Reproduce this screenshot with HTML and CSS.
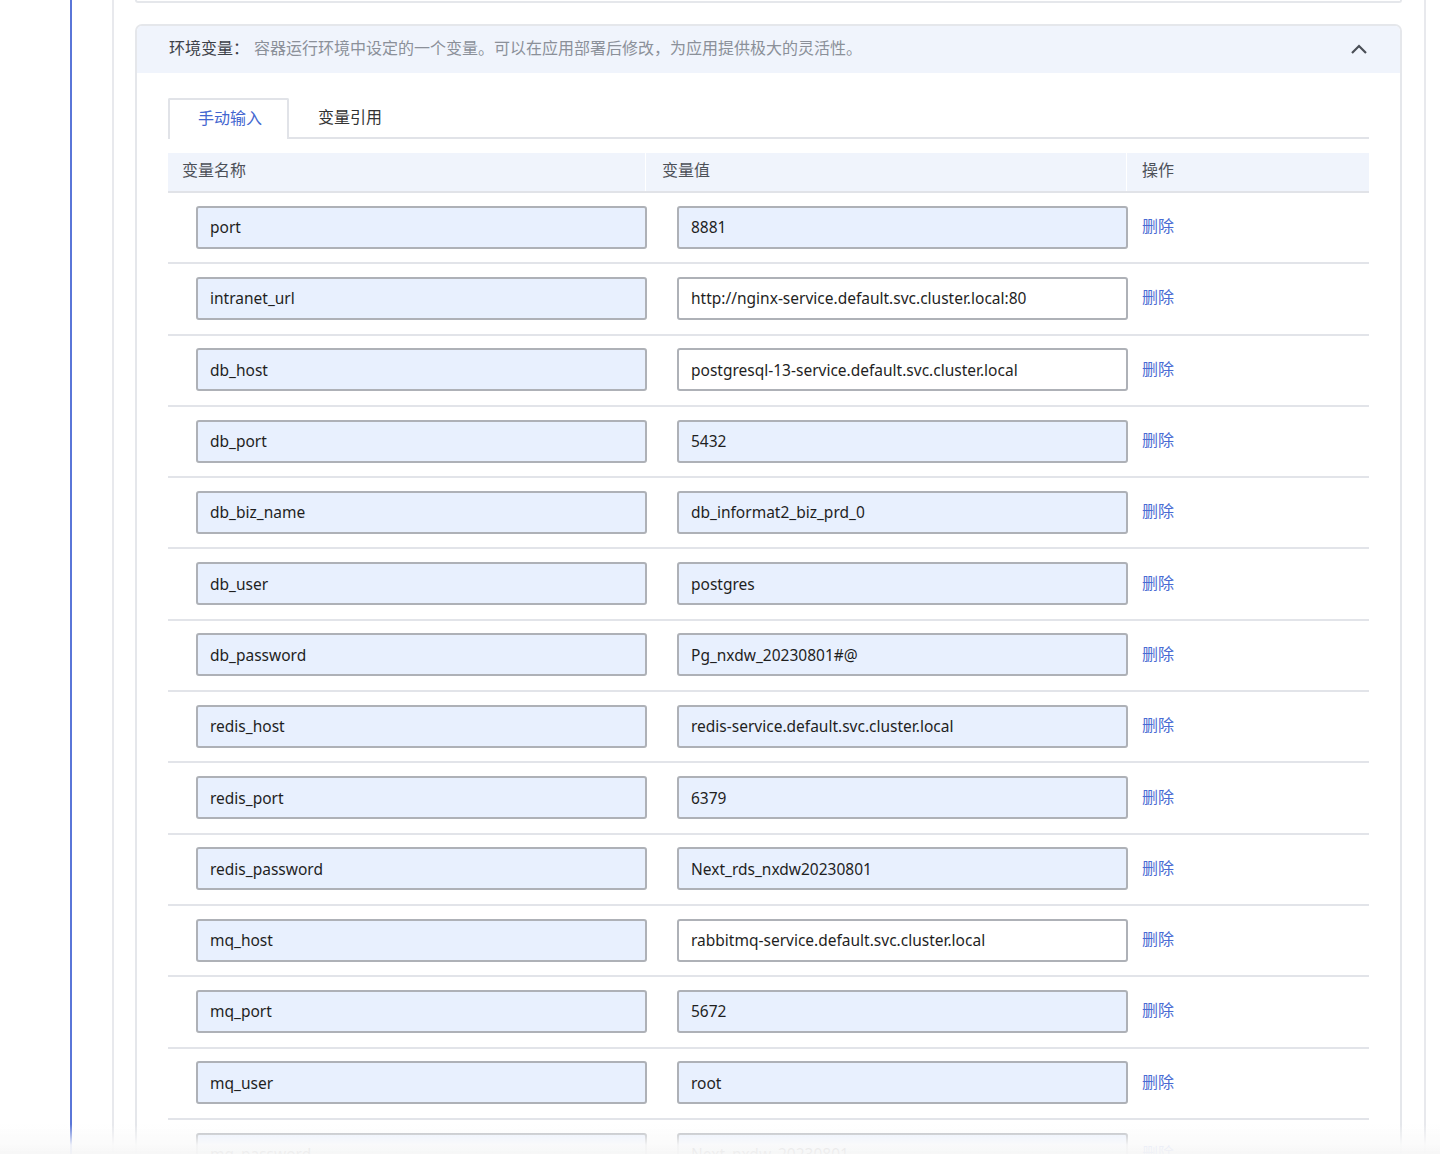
FILE: index.html
```html
<!DOCTYPE html>
<html lang="zh-CN">
<head>
<meta charset="utf-8">
<title>环境变量</title>
<link rel="stylesheet" href="styles.css">
</head>
<body>
<div class="page">
  <div class="rail"></div>
  <div class="main">
    <div class="container">
      <div class="prev-card"></div>
      <section class="env-card">
        <header class="env-head">
          <div class="env-title"><span class="env-label">环境变量：</span><span class="env-desc">容器运行环境中设定的一个变量。可以在应用部署后修改，为应用提供极大的灵活性。</span></div>
          <svg class="chevron" width="18" height="12" viewBox="0 0 18 12"><path d="M2 10 L9 3 L16 10" fill="none" stroke="#4a4f57" stroke-width="2.2"/></svg>
        </header>
        <div class="env-body">
          <div class="tabs">
            <div class="tab active">手动输入</div>
            <div class="tab">变量引用</div>
          </div>
          <div class="table">
            <div class="thead">
              <div class="th">变量名称</div>
              <div class="th">变量值</div>
              <div class="th">操作</div>
            </div>
            <div class="tr"><div class="td"><input class="ipt fill" value="port" readonly></div><div class="td"><input class="ipt fill" value="8881" readonly></div><div class="td"><a class="del">删除</a></div></div>
            <div class="tr"><div class="td"><input class="ipt fill" value="intranet_url" readonly></div><div class="td"><input class="ipt" value="http://nginx-service.default.svc.cluster.local:80" readonly></div><div class="td"><a class="del">删除</a></div></div>
            <div class="tr"><div class="td"><input class="ipt fill" value="db_host" readonly></div><div class="td"><input class="ipt" value="postgresql-13-service.default.svc.cluster.local" readonly></div><div class="td"><a class="del">删除</a></div></div>
            <div class="tr"><div class="td"><input class="ipt fill" value="db_port" readonly></div><div class="td"><input class="ipt fill" value="5432" readonly></div><div class="td"><a class="del">删除</a></div></div>
            <div class="tr"><div class="td"><input class="ipt fill" value="db_biz_name" readonly></div><div class="td"><input class="ipt fill" value="db_informat2_biz_prd_0" readonly></div><div class="td"><a class="del">删除</a></div></div>
            <div class="tr"><div class="td"><input class="ipt fill" value="db_user" readonly></div><div class="td"><input class="ipt fill" value="postgres" readonly></div><div class="td"><a class="del">删除</a></div></div>
            <div class="tr"><div class="td"><input class="ipt fill" value="db_password" readonly></div><div class="td"><input class="ipt fill" value="Pg_nxdw_20230801#@" readonly></div><div class="td"><a class="del">删除</a></div></div>
            <div class="tr"><div class="td"><input class="ipt fill" value="redis_host" readonly></div><div class="td"><input class="ipt fill" value="redis-service.default.svc.cluster.local" readonly></div><div class="td"><a class="del">删除</a></div></div>
            <div class="tr"><div class="td"><input class="ipt fill" value="redis_port" readonly></div><div class="td"><input class="ipt fill" value="6379" readonly></div><div class="td"><a class="del">删除</a></div></div>
            <div class="tr"><div class="td"><input class="ipt fill" value="redis_password" readonly></div><div class="td"><input class="ipt fill" value="Next_rds_nxdw20230801" readonly></div><div class="td"><a class="del">删除</a></div></div>
            <div class="tr"><div class="td"><input class="ipt fill" value="mq_host" readonly></div><div class="td"><input class="ipt" value="rabbitmq-service.default.svc.cluster.local" readonly></div><div class="td"><a class="del">删除</a></div></div>
            <div class="tr"><div class="td"><input class="ipt fill" value="mq_port" readonly></div><div class="td"><input class="ipt fill" value="5672" readonly></div><div class="td"><a class="del">删除</a></div></div>
            <div class="tr"><div class="td"><input class="ipt fill" value="mq_user" readonly></div><div class="td"><input class="ipt fill" value="root" readonly></div><div class="td"><a class="del">删除</a></div></div>
            <div class="tr"><div class="td"><input class="ipt fill" value="mq_password" readonly></div><div class="td"><input class="ipt fill" value="Next_nxdw_20230801" readonly></div><div class="td"><a class="del">删除</a></div></div>
          </div>
        </div>
      </section>
    </div>
  </div>
</div>
<div class="fade"></div>
</body>
</html>
```

FILE: styles.css
```css
html, body {
  margin: 0;
  padding: 0;
  background: #ffffff;
  height: 1154px;
  overflow: hidden;
}
body {
  font-family: "Noto Sans", "Noto Sans CJK SC", sans-serif;
  color: #222;
}
.page {
  display: flex;
  min-height: 1154px;
}
.rail {
  width: 70px;
  flex: none;
  border-right: 2px solid #5a76d8;
}
.main {
  flex: 1;
  padding-left: 40px;
  padding-right: 14px;
}
.container {
  border-left: 2px solid #e8e9ed;
  border-right: 2px solid #e8e9ed;
  padding: 0 22px 0 21px;
  min-height: 1154px;
}
.prev-card {
  height: 1px;
  border: 2px solid #e5e7eb;
  border-top: 0;
  border-radius: 0 0 6px 6px;
}
.env-card {
  margin-top: 21px;
  border: 2px solid #e5e7eb;
  border-radius: 7px;
  overflow: hidden;
}
.env-head {
  height: 47px;
  background: #f0f4fc;
  display: flex;
  align-items: center;
  justify-content: space-between;
  padding: 0 32px 0 32px;
}
.env-title {
  font-size: 16px;
  line-height: 20px;
  margin-top: -4px;
  white-space: nowrap;
}
.env-label {
  color: #3d4148;
  margin-right: 5px;
}
.env-desc {
  color: #8b9099;
}
.chevron {
  display: block;
  margin-top: -2px;
}
.env-body {
  padding: 25px 31px 0 31px;
}
.tabs {
  display: flex;
  border-bottom: 2px solid #e1e3e8;
  height: 39px;
}
.tab {
  height: 39px;
  padding: 0 29px;
  font-size: 16px;
  line-height: 39px;
  color: #333;
  box-sizing: border-box;
  white-space: nowrap;
}
.tab.active {
  color: #4466d0;
  border: 2px solid #e1e3e8;
  border-bottom: 0;
  height: 41px;
  line-height: 37px;
  padding: 0 25px 0 28px;
  background: #fff;
  border-radius: 2px 2px 0 0;
}
.table {
  margin-top: 14px;
}
.thead {
  display: grid;
  grid-template-columns: 478px 481px 241px;
  background: #f0f4fc;
  border-bottom: 2px solid #e1e3e8;
  height: 38px;
}
.th {
  font-size: 16px;
  line-height: 34px;
  padding-bottom: 4px;
  color: #4d5159;
  padding-left: 14px;
  border-right: 1px solid #ffffff;
}
.th:nth-child(2) {
  padding-left: 16px;
}
.th:last-child {
  border-right: 0;
  padding-left: 15px;
}
.tr {
  display: grid;
  grid-template-columns: 479px 480px 241px;
  align-items: center;
  height: 71.3px;
  box-sizing: border-box;
  border-bottom: 2px solid #e2e4e9;
  padding-bottom: 1px;
}
.td {
  padding-left: 28px;
}
.td:nth-child(2) {
  padding-left: 30px;
}
.td:last-child {
  padding-left: 15px;
  padding-bottom: 4px;
}
.ipt {
  display: block;
  box-sizing: border-box;
  width: 451px;
  height: 43px;
  border: 2px solid #aeb1b7;
  border-radius: 3px;
  background: #ffffff;
  padding: 0 12px;
  font-family: "Noto Sans", "Noto Sans CJK SC", sans-serif;
  font-size: 15.5px;
  color: #1f1f1f;
  outline: none;
}
.ipt.fill {
  background: #e8f0fe;
}
.del {
  font-size: 16px;
  color: #4a6bd3;
  cursor: pointer;
}
.fade {
  position: fixed;
  left: 0;
  right: 0;
  bottom: 0;
  height: 30px;
  background: linear-gradient(to bottom, rgba(255,255,255,0), rgba(250,250,250,0.92) 70%, rgba(246,246,246,0.97));
  pointer-events: none;
}
```
